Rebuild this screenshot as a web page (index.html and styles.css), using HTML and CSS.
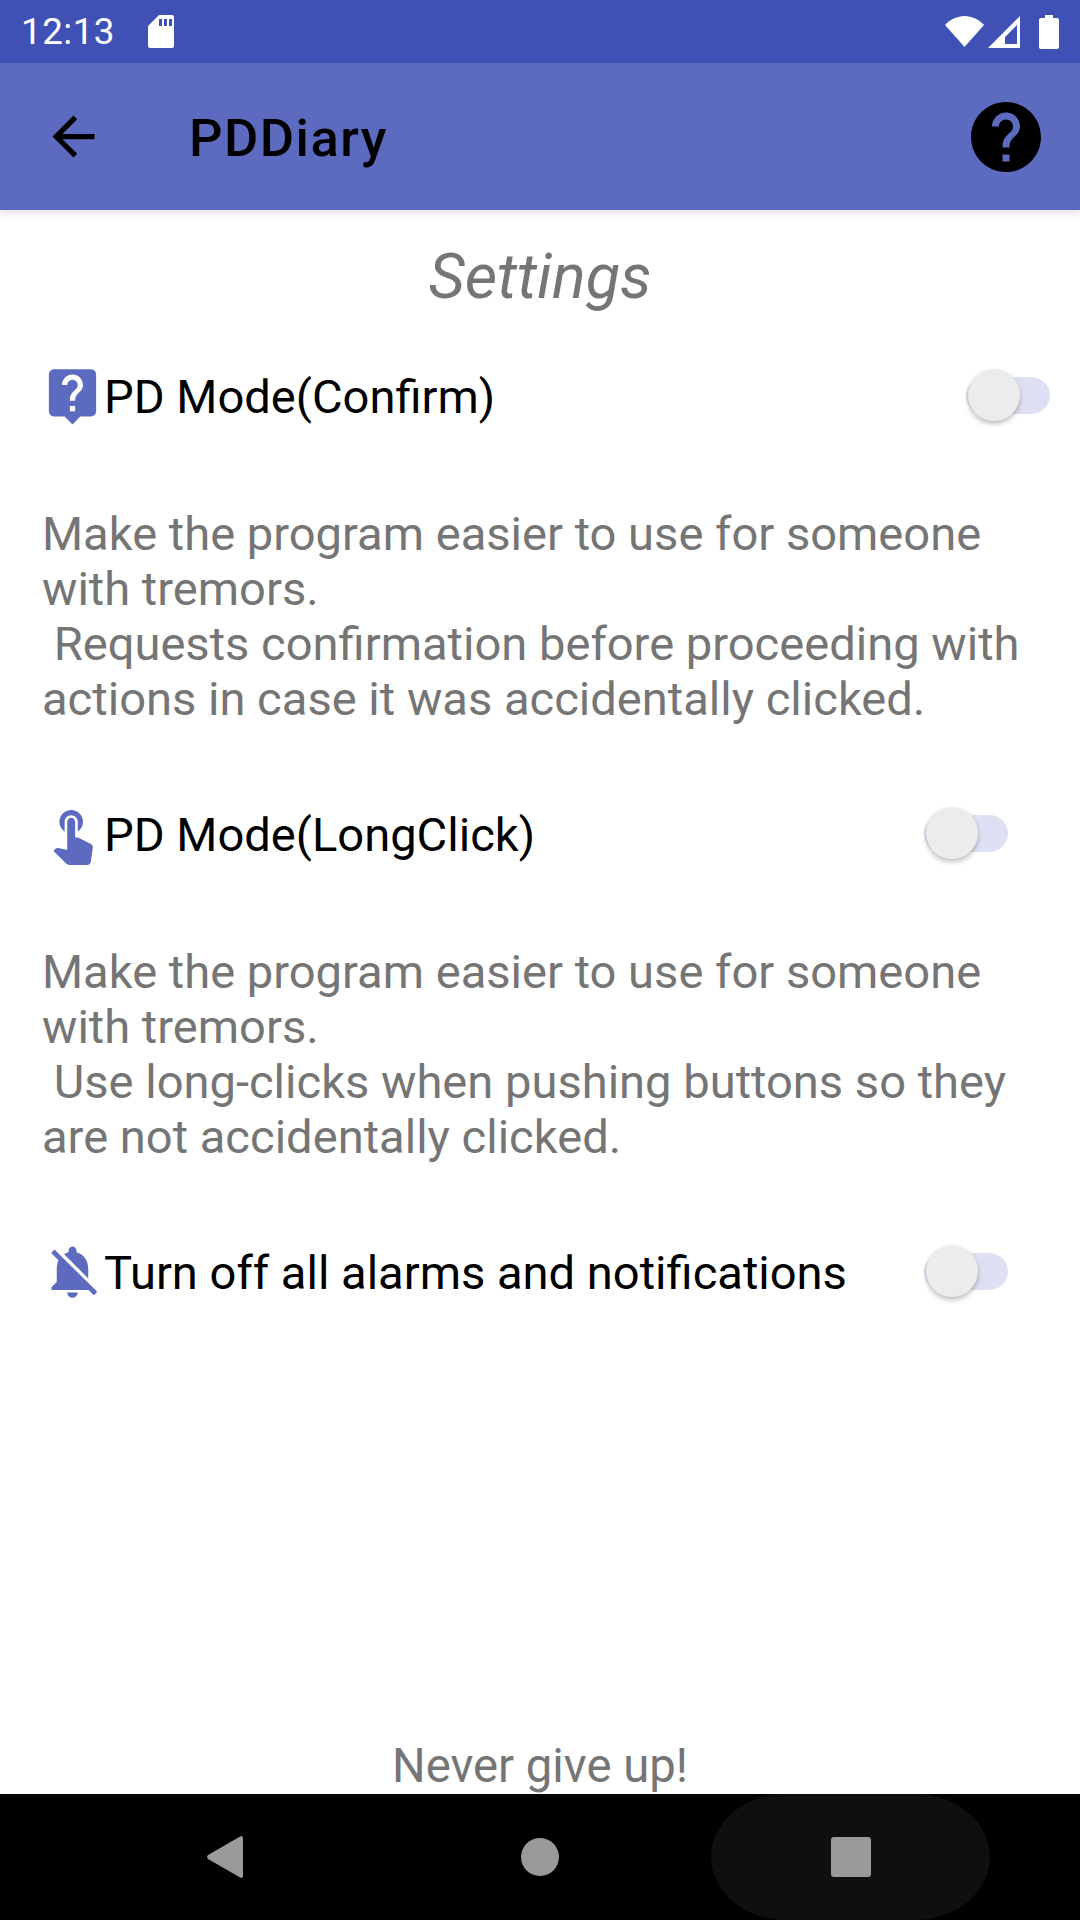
FILE: index.html
```html
<!DOCTYPE html>
<html lang="en">

<head>
    <meta charset="UTF-8">
    <meta name="viewport" content="width=device-width, initial-scale=1.0">
    <title>PDDiary Settings</title>
    <link rel="stylesheet" href="styles.css">
</head>

<body>
    <div class="statusbar">
        <span class="time">12:13</span>
        <svg class="sdcard" viewBox="0 0 26 33"><path fill="#fff" fill-rule="evenodd" d="M11 0h13a2 2 0 0 1 2 2v29a2 2 0 0 1-2 2H2a2 2 0 0 1-2-2V11zM11 4v7h3V4zM16 4v7h3V4zM21 4v7h3V4z"/></svg>
        <span class="spacer"></span>
        <svg class="wifi" viewBox="0 0 39 31"><path fill="#fff" d="M19.5 31L0 9C5 3.500 12 0 19.500 0S34 3.500 39 9z"/></svg>
        <svg class="signal" viewBox="0 0 32 32"><path fill="#fff" fill-rule="evenodd" d="M32 0v32H0zM29 9L17 21v7h12z"/></svg>
        <svg class="battery" viewBox="0 0 20 34"><path fill="#fff" d="M6 0h8v3h4a2 2 0 0 1 2 2v27a2 2 0 0 1-2 2H2a2 2 0 0 1-2-2V5a2 2 0 0 1 2-2h4z"/></svg>
    </div>

    <header class="toolbar">
        <svg class="back" viewBox="0 0 24 24"><path d="M20 11H7.830l5.590-5.590L12 4l-8 8 8 8 1.410-1.410L7.830 13H20v-2z"/></svg>
        <h1>PDDiary</h1>
        <svg class="help" viewBox="0 0 24 24"><path d="M12 2C6.480 2 2 6.480 2 12s4.480 10 10 10 10-4.480 10-10S17.520 2 12 2zm1 17h-2v-2h2v2zm2.070-7.750l-.9.920C13.450 12.900 13 13.500 13 15h-2v-.5c0-1.100.450-2.100 1.170-2.830l1.240-1.260c.370-.360.590-.860.590-1.410 0-1.100-.9-2-2-2s-2 .9-2 2H8c0-2.210 1.790-4 4-4s4 1.790 4 4c0 .880-.360 1.680-.930 2.250z"/></svg>
    </header>

    <main class="content">
        <h2>Settings</h2>

        <div class="row row-wide">
            <svg class="icon" viewBox="0 0 24 24"><path d="M19 2H5c-1.110 0-2 .9-2 2v14c0 1.100.890 2 2 2h4l3 3 3-3h4c1.100 0 2-.9 2-2V4c0-1.100-.9-2-2-2zm-6 16h-2v-2h2v2zm2.070-7.750l-.9.920C13.450 11.900 13 12.500 13 14h-2v-.5c0-1.100.450-2.100 1.170-2.830l1.240-1.260c.370-.360.590-.860.590-1.410 0-1.100-.9-2-2-2s-2 .9-2 2H8c0-2.210 1.790-4 4-4s4 1.790 4 4c0 .880-.360 1.680-.930 2.250z"/></svg>
            <span class="label">PD Mode(Confirm)</span>
            <span class="switch"><span class="thumb"></span></span>
        </div>
        <p class="desc">Make the program easier to use for someone with tremors.<br>&nbsp;Requests confirmation before proceeding with actions in case it was accidentally clicked.</p>

        <div class="row">
            <svg class="icon" viewBox="0 0 24 24"><path d="M9 11.240V7.500C9 6.120 10.120 5 11.500 5S14 6.120 14 7.500v3.740c1.210-.810 2-2.180 2-3.740C16 5.010 13.990 3 11.500 3S7 5.010 7 7.500c0 1.560.790 2.930 2 3.740zm9.840 4.630l-4.540-2.260c-.170-.070-.350-.110-.540-.110H13v-6c0-.830-.670-1.500-1.500-1.500S10 6.670 10 7.500v10.740l-3.430-.720c-.080-.010-.150-.030-.240-.030-.310 0-.590.130-.790.330l-.79.800 4.940 4.940c.270.270.650.440 1.060.440h6.790c.750 0 1.330-.550 1.440-1.280l.750-5.270c.010-.070.020-.140.020-.2 0-.620-.380-1.160-.910-1.380z"/></svg>
            <span class="label">PD Mode(LongClick)</span>
            <span class="switch"><span class="thumb"></span></span>
        </div>
        <p class="desc">Make the program easier to use for someone with tremors.<br>&nbsp;Use long-clicks when pushing buttons so they are not accidentally clicked.</p>

        <div class="row">
            <svg class="icon" viewBox="0 0 24 24">
                <path d="M12 22c1.100 0 2-.9 2-2h-4c0 1.100.890 2 2 2zm6-6v-5c0-3.070-1.640-5.640-4.500-6.320V4c0-.830-.670-1.500-1.500-1.500s-1.500.670-1.500 1.500v.680C7.630 5.360 6 7.920 6 11v5l-2 2v1h16v-1l-2-2z"/>
                <path class="slash-gap" d="M5.400 3.100L21.800 19.600"/>
                <path class="slash" d="M4.500 4.300L20.800 20.400"/>
            </svg>
            <span class="label">Turn off all alarms and notifications</span>
            <span class="switch"><span class="thumb"></span></span>
        </div>

        <p class="motto">Never give up!</p>
    </main>

    <nav class="navbar">
        <span class="navslot">
            <svg class="nav-back" viewBox="0 0 36 42"><path fill="#9a9a9a" d="M34 0a2 2 0 0 1 2 2v38a2 2 0 0 1-2 2L1 23a3 3 0 0 1 0-4z"/></svg>
        </span>
        <span class="navslot">
            <span class="nav-home"></span>
        </span>
        <span class="navslot navslot-active">
            <span class="nav-recent"></span>
        </span>
    </nav>
</body>

</html>
```

FILE: styles.css
```css
* {
    box-sizing: border-box;
}

html,
body {
    margin: 0;
    padding: 0;
}

body {
    width: 1080px;
    height: 1920px;
    display: flex;
    flex-direction: column;
    font-family: Roboto, "Liberation Sans", sans-serif;
    background-color: #fff;
    overflow: hidden;
}

svg {
    display: block;
    flex: none;
}

.statusbar {
    height: 63px;
    display: flex;
    align-items: center;
    padding: 0 21px 0 21px;
    background-color: #3f51b5;
    color: #fff;
}

.time {
    font-size: 36.75px;
    letter-spacing: 0.5px;
}

.sdcard {
    width: 26px;
    height: 33px;
    margin-left: 33px;
}

.spacer {
    flex: 1;
}

.wifi {
    width: 39px;
    height: 31px;
}

.signal {
    width: 32px;
    height: 32px;
    margin-left: 4px;
}

.battery {
    width: 20px;
    height: 34px;
    margin-left: 19px;
}

.toolbar {
    height: 147px;
    display: flex;
    align-items: center;
    padding: 0 32px 0 42px;
    background-color: #5c6bc0;
    box-shadow: 0 4px 6px rgba(0, 0, 0, 0.1);
    position: relative;
}

.back {
    width: 63px;
    height: 63px;
}

.toolbar h1 {
    flex: 1;
    margin: 3px 0 0 84px;
    font-size: 52.5px;
    font-weight: 500;
    letter-spacing: 1.5px;
    color: #000;
}

.help {
    width: 84px;
    height: 84px;
}

.content {
    flex: 1;
    display: flex;
    flex-direction: column;
    padding: 0 0 0 43px;
}

.content h2 {
    margin: 30px 0 0 -43px;
    font-size: 63px;
    font-weight: 400;
    font-style: italic;
    text-align: center;
    color: #757575;
}

.row {
    display: flex;
    align-items: center;
    height: 63px;
    padding-right: 72px;
}

.row-wide {
    margin-top: 51px;
    padding-right: 30px;
}

.icon {
    width: 63px;
    height: 63px;
    margin-left: -2px;
    fill: #5c6bc0;
}

.slash-gap {
    fill: none;
    stroke: #fff;
    stroke-width: 1.6;
}

.slash {
    fill: none;
    stroke: #5c6bc0;
    stroke-width: 1.8;
}

.label {
    flex: 1;
    margin-top: 2px;
    font-size: 47.1px;
    color: #000;
}

.switch {
    position: relative;
    width: 84px;
    height: 37px;
    border-radius: 19px;
    background-color: #dee1f3;
}

.thumb {
    position: absolute;
    left: 2px;
    top: -8px;
    width: 52px;
    height: 52px;
    border-radius: 50%;
    background-color: #ececec;
    box-shadow: 0 3px 5px rgba(0, 0, 0, 0.25);
}

.desc {
    margin: 79px 30px 76px -1px;
    font-size: 47.1px;
    line-height: 55px;
    color: #757575;
}

.motto {
    margin: auto 0 0 -43px;
    font-size: 47.25px;
    line-height: 55px;
    text-align: center;
    color: #757575;
}

.navbar {
    height: 126px;
    display: flex;
    background-color: #000;
}

.navslot {
    display: flex;
    align-items: center;
    justify-content: center;
}

.navslot:nth-child(1) {
    width: 243px;
    justify-content: flex-end;
}

.navslot:nth-child(2) {
    width: 316px;
    justify-content: flex-end;
}

.nav-back {
    width: 36px;
    height: 42px;
}

.nav-home {
    width: 38px;
    height: 38px;
    border-radius: 50%;
    background-color: #9a9a9a;
}

.navslot-active {
    width: 279px;
    margin-left: 152px;
    border-radius: 130px / 110px;
    background-color: #0f0f0f;
}

.nav-recent {
    width: 40px;
    height: 40px;
    border-radius: 3px;
    background-color: #9a9a9a;
}
```
